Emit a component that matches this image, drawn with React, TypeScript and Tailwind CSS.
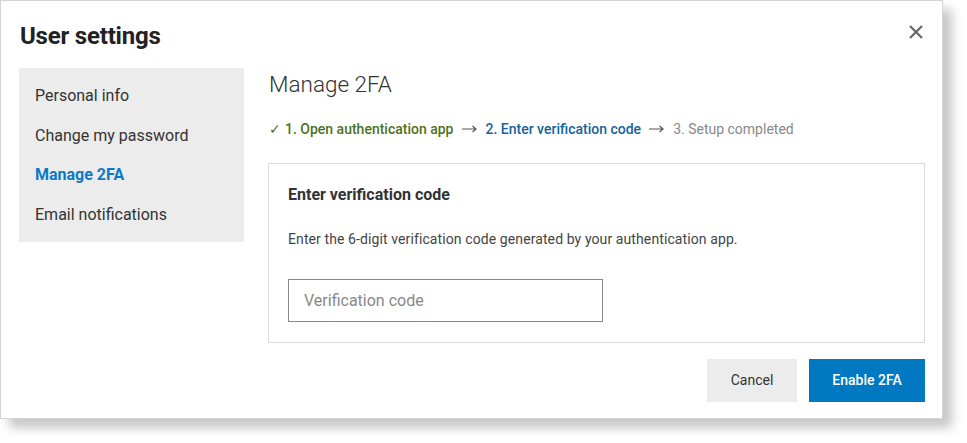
import React from 'react';

const navItems = ['Personal info', 'Change my password', 'Manage 2FA', 'Email notifications'];

const Arrow: React.FC = () => (
  <svg width="16" height="8" viewBox="0 0 16 8" className="mx-[8px] text-[#555]">
    <path d="M0 4h14M10.5 1l3.5 3-3.5 3" fill="none" stroke="currentColor" strokeWidth="1.2" />
  </svg>
);

const App: React.FC = () => {
  const active = 'Manage 2FA';
  return (
    <div className="w-[967px] h-[443px] bg-white font-['Roboto',sans-serif]">
      <div className="w-[943px] h-[419px] border border-[#d4d4d4] bg-white shadow-[9px_9px_10px_rgba(0,0,0,0.22)] flex flex-col">
        <div className="flex items-center justify-between pl-[19px] pr-[18px] pt-[20px] h-[67px]">
          <h1 className="text-[24px] font-bold text-[#222] tracking-[-0.2px] leading-none -mt-[17px]">User settings</h1>
          <button className="text-[#666] -mt-[25px]" aria-label="Close">
            <svg width="16" height="16" viewBox="0 0 16 16">
              <path d="M2 2l12 12M14 2L2 14" stroke="currentColor" strokeWidth="2.2" />
            </svg>
          </button>
        </div>
        <div className="flex pl-[18px] pr-[17px]">
          <nav className="w-[225px] h-[174px] bg-[#ececec] pt-[16px] pl-[16px] flex flex-col">
            {navItems.map(item => (
              <a
                key={item}
                className={`h-[39.5px] flex items-start text-[16px] ${
                  item === active ? 'text-[#0b7ac6] font-bold' : 'text-[#333]'
                }`}
              >
                {item}
              </a>
            ))}
          </nav>
          <div className="flex-1 ml-[24px] flex flex-col">
            <h2 className="text-[22.5px] font-light text-[#333] leading-[30px] mt-[1px] ml-[1px]">Manage 2FA</h2>
            <div className="flex items-center text-[14px] mt-[20px] h-[20px] ml-[1px]">
              <span className="text-[#4d7223] font-medium mr-[4px]">✓</span>
              <span className="text-[#4d7223] font-medium">1. Open authentication app</span>
              <Arrow />
              <span className="text-[#15639c] font-medium">2. Enter verification code</span>
              <Arrow />
              <span className="text-[#888]">3. Setup completed</span>
            </div>
            <div className="mt-[24px] h-[180px] border border-[#dadada] px-[19px] pt-[20px]">
              <h3 className="text-[16px] font-bold text-[#333] leading-[22px]">Enter verification code</h3>
              <p className="text-[14px] text-[#444] mt-[23px] leading-[20px] tracking-[0.1px]">
                Enter the 6-digit verification code generated by your authentication app.
              </p>
              <input
                placeholder="Verification code"
                className="mt-[30px] w-[315px] h-[43px] border border-[#888] px-[15px] text-[16px] placeholder:text-[#888] outline-none"
              />
            </div>
            <div className="flex justify-end gap-[12px] mt-[16px]">
              <button className="w-[90px] h-[43px] bg-[#ececec] text-[#333] text-[14px]">Cancel</button>
              <button className="w-[116px] h-[43px] bg-[#0079c2] text-white text-[14px] font-medium">Enable 2FA</button>
            </div>
          </div>
        </div>
      </div>
    </div>
  );
};

export default App;
